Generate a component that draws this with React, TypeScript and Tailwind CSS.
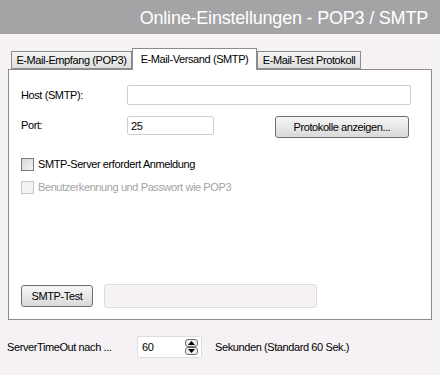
import { useState } from 'react';

const font = { fontFamily: '"Liberation Sans", Arial, sans-serif' };

function Checkbox({ label, disabled }: { label: string; disabled?: boolean }) {
  return (
    <label className={`flex items-center h-[13px] ${disabled ? 'text-[#a3a3a3]' : 'text-black'}`}>
      <span
        className={`w-[13px] h-[13px] border ${
          disabled ? 'border-[#c8c8c8] bg-[#f2f2f2]' : 'border-[#7a7a7a] bg-gradient-to-br from-[#d8d8d8] to-[#f4f4f4]'
        }`}
      />
      <span className="ml-[4px]">{label}</span>
    </label>
  );
}

function Button({ children, className }: { children: string; className?: string }) {
  return (
    <button
      className={`rounded-[3px] border border-[#6f6f6f] bg-gradient-to-b from-[#f7f7f7] to-[#d9d9d9] text-black ${className || ''}`}
    >
      {children}
    </button>
  );
}

function Tab({ label, width, active, onClick }: { label: string; width: string; active: boolean; onClick: () => void }) {
  if (active) {
    return (
      <button
        onClick={onClick}
        className={`${width} h-[22px] -mb-[1px] whitespace-nowrap border border-b-0 border-[#8c8c8c] bg-white relative z-10 text-black`}
      >
        {label}
      </button>
    );
  }
  return (
    <button
      onClick={onClick}
      className={`${width} h-[18px] whitespace-nowrap border border-[#8c8c8c] bg-gradient-to-b from-[#f4f4f4] to-[#dedede] text-black`}
    >
      {label}
    </button>
  );
}

export default function App() {
  const [tab, setTab] = useState(1);
  const tabs = [
    { label: 'E-Mail-Empfang (POP3)', width: 'w-[121px]' },
    { label: 'E-Mail-Versand (SMTP)', width: 'w-[125px]' },
    { label: 'E-Mail-Test Protokoll', width: 'w-[104px]' },
  ];

  return (
    <div className="w-[440px] h-[375px] bg-[#f5f1f5] text-[11px] tracking-[-0.4px] overflow-hidden" style={font}>
      <header className="h-[34px] bg-[#a4a3a6] flex items-center justify-end pr-[12px] pt-[2px]">
        <h1 className="text-white text-[18px] tracking-[-0.2px]">Online-Einstellungen - POP3 / SMTP</h1>
      </header>

      <div className="flex items-end pl-[11px] mt-[14px]">
        {tabs.map((t, i) => (
          <Tab key={t.label} label={t.label} width={t.width} active={tab === i} onClick={() => setTab(i)} />
        ))}
      </div>

      <section className="mx-[8px] h-[251px] border border-[#8c8c8c] bg-white flex flex-col pt-[15px] pl-[12px] pr-[20px] pb-[11px]">
        <div className="flex items-center h-[20px]">
          <span className="w-[106px]">Host (SMTP):</span>
          <input className="flex-1 h-[20px] border border-[#cbced4] rounded-[2px] bg-white outline-none px-[3px]" />
        </div>

        <div className="flex items-start mt-[11px]">
          <span className="w-[106px] leading-[19px]">Port:</span>
          <input
            defaultValue="25"
            className="w-[87px] h-[19px] border border-[#cbced4] rounded-[2px] bg-white outline-none px-[3px]"
          />
          <Button className="ml-auto mr-[2px] w-[134px] h-[22px]">Protokolle anzeigen...</Button>
        </div>

        <div className="mt-[20px]">
          <Checkbox label="SMTP-Server erfordert Anmeldung" />
        </div>
        <div className="mt-[10px]">
          <Checkbox label="Benutzerkennung und Passwort wie POP3" disabled />
        </div>

        <div className="mt-auto flex items-center">
          <Button className="w-[72px] h-[22px]">SMTP-Test</Button>
          <div className="ml-[11px] w-[213px] h-[24px] border border-[#dcdde3] rounded-[3px] bg-[#f5f1f5]" />
        </div>
      </section>

      <div className="flex items-center mt-[16px] pl-[7px]">
        <span className="w-[130px]">ServerTimeOut nach ...</span>
        <div className="w-[65px] h-[22px] border border-[#dcdde3] rounded-[2px] bg-white flex items-start justify-between pl-[4px] pr-[3px] pt-[2px]">
          <span>60</span>
          <div className="flex flex-col">
            <span className="w-[13px] h-[8px] border border-[#6f6f6f] rounded-[3px] bg-[#eeeeee] flex items-center justify-center">
              <svg width="7" height="4" viewBox="0 0 7 4"><path d="M0 4 L3.5 0 L7 4 Z" fill="#000" /></svg>
            </span>
            <span className="w-[13px] h-[8px] border border-[#6f6f6f] rounded-[3px] bg-[#eeeeee] flex items-center justify-center">
              <svg width="7" height="4" viewBox="0 0 7 4"><path d="M0 0 L3.5 4 L7 0 Z" fill="#000" /></svg>
            </span>
          </div>
        </div>
        <span className="ml-[13px]">Sekunden (Standard 60 Sek.)</span>
      </div>
    </div>
  );
}
